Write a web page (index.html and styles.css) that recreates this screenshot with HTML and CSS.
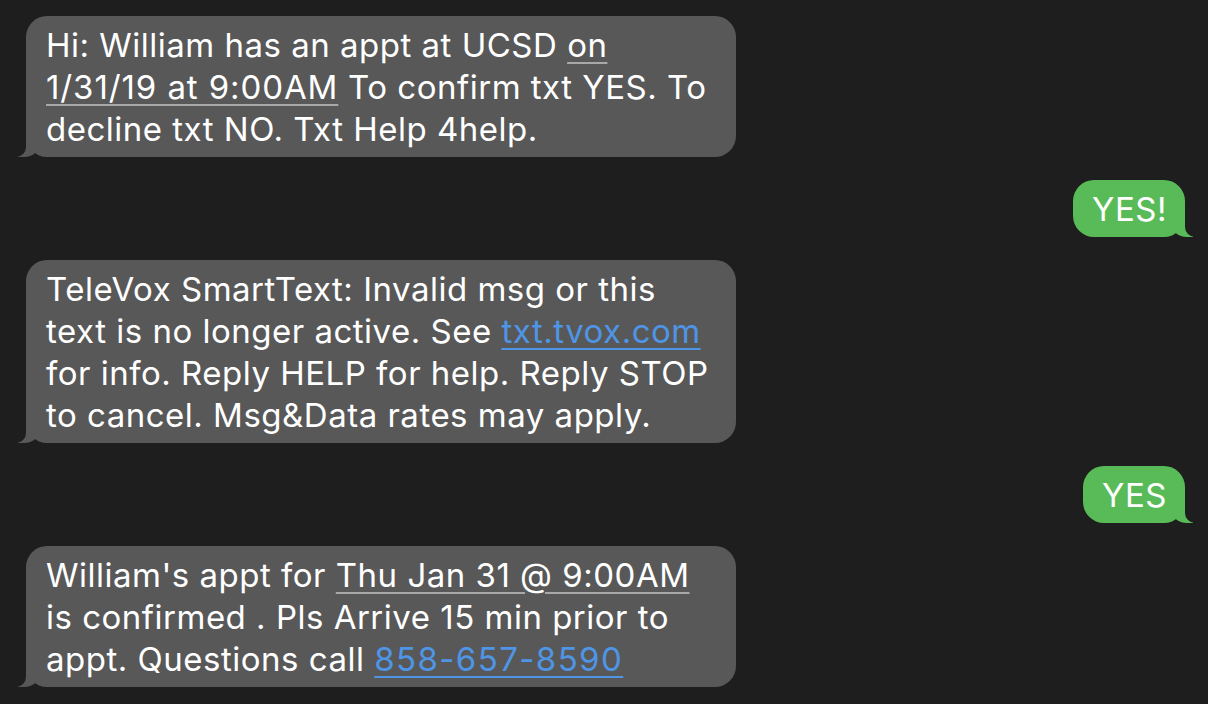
FILE: index.html
```html
<!DOCTYPE html>
<html lang="en">
<head>
<meta charset="utf-8">
<title>Messages</title>
<link rel="stylesheet" href="styles.css">
</head>
<body>
<div class="thread">
  <div class="row row-in">
    <div class="bubble in">Hi: William has an appt at UCSD <span class="detect">on</span><br><span class="detect date">1/31/19 at 9:00AM</span> To confirm txt YES. To<br>decline txt NO. Txt Help 4help.</div>
  </div>
  <div class="row row-out">
    <div class="bubble out">YES!</div>
  </div>
  <div class="row row-in">
    <div class="bubble in">TeleVox SmartText: Invalid msg or this<br>text is no longer active. See <span class="link">txt.tvox.com</span><br>for info. Reply HELP for help. Reply STOP<br>to cancel. Msg&amp;Data rates may apply.</div>
  </div>
  <div class="row row-out">
    <div class="bubble out">YES</div>
  </div>
  <div class="row row-in">
    <div class="bubble in">William's appt for <span class="detect">Thu Jan 31 @ 9:00AM</span><br>is confirmed . Pls Arrive 15 min prior to<br>appt. Questions call <span class="link phone">858-657-8590</span></div>
  </div>
</div>
</body>
</html>
```
FILE: styles.css
```css
html, body {
  margin: 0;
  padding: 0;
  background: #1e1e1e;
}
body {
  font-family: Inter, "Liberation Sans", Arial, sans-serif;
  color: #ffffff;
}
.thread {
  display: flex;
  flex-direction: column;
  gap: 23px;
  padding: 16px 23px 0 26px;
}
.row {
  display: flex;
}
.row-in {
  justify-content: flex-start;
}
.row-out {
  justify-content: flex-end;
}
.bubble {
  position: relative;
  font-size: 33px;
  line-height: 42px;
  letter-spacing: 0.5px;
  padding: 8px 20px 7px 20px;
  border-radius: 21px;
  white-space: nowrap;
}
.bubble.in {
  background: #585858;
  width: 670px;
}
.bubble.out {
  background: #59bb57;
  padding-left: 19px;
  padding-right: 18px;
}
.bubble::before,
.bubble::after {
  content: "";
  position: absolute;
  bottom: 0;
  height: 22px;
}
.bubble.in::before {
  left: -8px;
  width: 22px;
  background: #585858;
  border-bottom-right-radius: 16px 14px;
}
.bubble.in::after {
  left: -12px;
  width: 12px;
  background: #1e1e1e;
  border-bottom-right-radius: 10px;
}
.bubble.out::before {
  right: -8px;
  width: 22px;
  background: #59bb57;
  border-bottom-left-radius: 16px 14px;
}
.bubble.out::after {
  right: -12px;
  width: 12px;
  background: #1e1e1e;
  border-bottom-left-radius: 10px;
}
.detect {
  text-decoration: underline;
  text-decoration-color: #a8a8a8;
  text-decoration-thickness: 2px;
  text-underline-offset: 5px;
}
.link {
  color: #4f95e6;
  text-decoration: underline;
  text-decoration-color: #4f95e6;
  text-decoration-thickness: 2px;
  text-underline-offset: 5px;
}
.date {
  letter-spacing: 0.9px;
}
.phone {
  letter-spacing: 1.4px;
}
```
